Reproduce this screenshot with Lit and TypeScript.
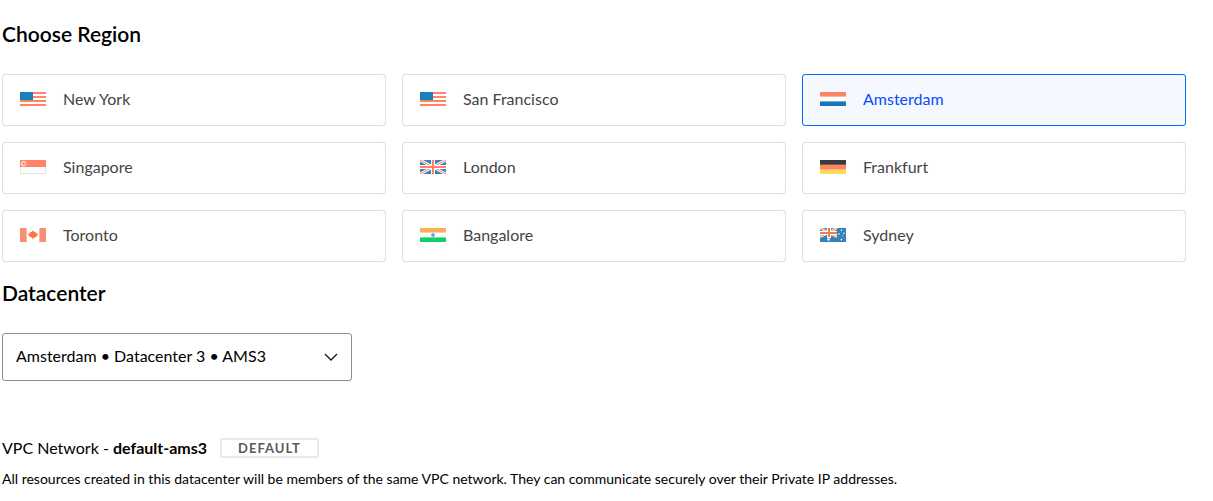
import { LitElement, html, css, svg, TemplateResult } from "lit";
import { customElement, property, state } from "lit/decorators.js";

type Flag = "us" | "nl" | "sg" | "gb" | "de" | "ca" | "in" | "au";

interface Region {
  id: string;
  name: string;
  flag: Flag;
}

const REGIONS: Region[] = [
  { id: "nyc", name: "New York", flag: "us" },
  { id: "sfo", name: "San Francisco", flag: "us" },
  { id: "ams", name: "Amsterdam", flag: "nl" },
  { id: "sgp", name: "Singapore", flag: "sg" },
  { id: "lon", name: "London", flag: "gb" },
  { id: "fra", name: "Frankfurt", flag: "de" },
  { id: "tor", name: "Toronto", flag: "ca" },
  { id: "blr", name: "Bangalore", flag: "in" },
  { id: "syd", name: "Sydney", flag: "au" },
];

const FLAGS: Record<Flag, TemplateResult> = {
  us: svg`
    <rect width="26" height="14" fill="#fff" />
    <path d="M0 1h26M0 5h26M0 9h26M0 13h26" stroke="#ff8465" stroke-width="2" />
    <rect width="13" height="8" fill="#1c7fc0" />
    <path d="M0 8.5h13" stroke="#f58a1f" />`,
  nl: svg`
    <rect width="26" height="14" fill="#fff" />
    <rect width="26" height="4.6" fill="#ff8465" />
    <rect y="9.4" width="26" height="4.6" fill="#1777b8" />`,
  sg: svg`
    <rect x=".5" y=".5" width="25" height="13" fill="#fff" stroke="#e3e3e3" />
    <rect width="26" height="7" fill="#ff8465" />
    <path d="M3.8 1.5a2.1 2.1 0 1 0 0 4.2" fill="none" stroke="#fff" stroke-width="1.1" />
    <path d="M4 2h2.2M4.5 3.5h1M5.5 4.5h1M4 5.5h1" stroke="#fff" />`,
  gb: svg`
    <rect width="26" height="14" fill="#3a84ba" />
    <path d="M0 0L26 14M26 0L0 14" stroke="#fff" stroke-width="2.8" />
    <path d="M0 0L26 14M26 0L0 14" stroke="#ff8465" stroke-width="1" />
    <path d="M13 0v14M0 7h26" stroke="#fff" stroke-width="4" />
    <path d="M13 0v14M0 7h26" stroke="#ff8465" stroke-width="2" />`,
  de: svg`
    <rect width="26" height="14" fill="#ff8465" />
    <rect width="26" height="4.6" fill="#383b3d" />
    <rect y="9.4" width="26" height="4.6" fill="#ffdc60" />`,
  ca: svg`
    <rect width="26" height="14" fill="#fff" />
    <path d="M0 0h6.6v14H0zM19.4 0H26v14h-6.6z" fill="#fb8e70" />
    <path d="M13 2.4l1.6 1.6 1.2.1v1.4l1.4-.2.7 1.5-1.2 1.5-2.6 1.7h-.7v1.4h-.8V10H12L9.3 8.3 8.1 6.8l.7-1.5 1.4.2V4.1l1.2-.1z" fill="#fb7444" />`,
  in: svg`
    <rect width="26" height="14" fill="#fff" />
    <rect width="26" height="4.6" fill="#f9ae5c" />
    <rect y="9.4" width="26" height="4.6" fill="#12ce66" />
    <circle cx="13" cy="7" r="1.5" fill="#76a9e0" stroke="#4b87cc" stroke-width=".6" />`,
  au: svg`
    <rect width="26" height="14" fill="#3381b8" />
    <path d="M0 0L17 9M17 0L0 9" stroke="#fff" stroke-width="2.4" />
    <path d="M0 0L17 9M17 0L0 9" stroke="#ff8465" stroke-width=".9" />
    <path d="M9 0v10M0 5h17" stroke="#fff" stroke-width="4" />
    <path d="M9 0v9M0 5h17" stroke="#fb7a35" stroke-width="2" />
    <g fill="#fff">
      <circle cx="8.5" cy="11.5" r="1.2" />
      <circle cx="21.5" cy="2.3" r=".8" />
      <circle cx="19" cy="6" r=".8" />
      <circle cx="24" cy="5.3" r=".8" />
      <circle cx="22.8" cy="7.7" r=".5" />
      <circle cx="21.5" cy="11.6" r=".9" />
    </g>`,
};

@customElement("region-flag")
export class RegionFlag extends LitElement {
  @property() flag: Flag = "us";

  static styles = css`
    :host {
      display: block;
      flex: none;
      width: 26px;
      height: 14px;
    }
    .flag {
      display: block;
      width: 100%;
      height: 100%;
    }
  `;

  render() {
    return html`<svg class="flag" viewBox="0 0 26 14" aria-hidden="true">${FLAGS[this.flag]}</svg>`;
  }
}

@customElement("app-root")
export class AppRoot extends LitElement {
  @state() private region = "ams";

  static styles = css`
    :host {
      display: block;
      box-sizing: border-box;
      padding: 20px 27px 8px 2px;
      background: #fff;
      color: #000;
      font-family: Lato, "Open Sans", sans-serif;
      font-size: 16px;
      line-height: 20px;
    }
    *,
    *::before {
      box-sizing: border-box;
    }
    .heading {
      display: block;
      margin: 0;
      padding: 0;
      font-size: 21px;
      font-weight: 600;
      line-height: 28px;
    }
    .regions {
      display: grid;
      grid-template-columns: repeat(3, minmax(0, 1fr));
      gap: 16px;
      margin: 26px 0 17px;
    }
    .group {
      min-width: 0;
      margin: 0;
      padding: 0;
      border: 0;
    }
    .card {
      display: flex;
      align-items: center;
      padding: 14px 17px 16px;
      border: 1px solid #dfdfdf;
      border-radius: 3px;
      color: #444;
      cursor: pointer;
    }
    .card.selected {
      border-color: #0069ff;
      background: #f5f9ff;
      color: #0a4bff;
    }
    .card:focus-within {
      outline: 2px solid #99c3ff;
    }
    .radio {
      appearance: none;
      width: 0;
      height: 0;
      margin: 0;
      outline: 0;
    }
    .name {
      margin-left: 17px;
    }
    .picker {
      display: grid;
      align-items: center;
      max-width: 350px;
      margin: 26px 0 57px;
    }
    .select,
    .chevron {
      grid-area: 1 / 1;
    }
    .select {
      appearance: none;
      width: 100%;
      height: 48px;
      padding: 0 40px 2px 13px;
      border: 1px solid #8c8c8c;
      border-radius: 3px;
      background: #fff;
      color: #000;
      font: inherit;
    }
    .chevron {
      justify-self: end;
      width: 14px;
      height: 8px;
      margin-right: 14px;
      pointer-events: none;
    }
    .network {
      display: flex;
      align-items: center;
      gap: 13px;
    }
    .title {
      margin: 0;
    }
    .badge {
      padding: 0 16px;
      border: 2px solid #e9e9e9;
      border-radius: 3px;
      color: #5b5b5b;
      font-size: 13px;
      font-weight: 700;
      line-height: 16px;
      letter-spacing: 1px;
    }
    .note {
      margin: 11px 0 0;
      font-size: 14px;
    }
  `;

  render() {
    return html`
      <fieldset class="group">
        <legend class="heading">Choose Region</legend>
        <div class="regions">
          ${REGIONS.map(
            (r) => html`
              <label class="card ${r.id === this.region ? "selected" : ""}">
                <input
                  class="radio"
                  type="radio"
                  name="region"
                  .value=${r.id}
                  .checked=${r.id === this.region}
                  @change=${() => (this.region = r.id)}
                />
                <region-flag .flag=${r.flag}></region-flag>
                <span class="name">${r.name}</span>
              </label>
            `
          )}
        </div>
      </fieldset>
      <label class="heading" for="datacenter">Datacenter</label>
      <div class="picker">
        <select class="select" id="datacenter">
          <option>Amsterdam • Datacenter 3 • AMS3</option>
        </select>
        <svg class="chevron" viewBox="0 0 14 8" fill="none" stroke="#111" stroke-width="1.3" aria-hidden="true">
          <path d="M1 1l6 6 6-6" />
        </svg>
      </div>
      <div class="network">
        <p class="title">VPC Network - <strong>default-ams3</strong></p>
        <span class="badge">DEFAULT</span>
      </div>
      <p class="note">
        All resources created in this datacenter will be members of the same VPC network. They can communicate securely
        over their Private IP addresses.
      </p>
    `;
  }
}
